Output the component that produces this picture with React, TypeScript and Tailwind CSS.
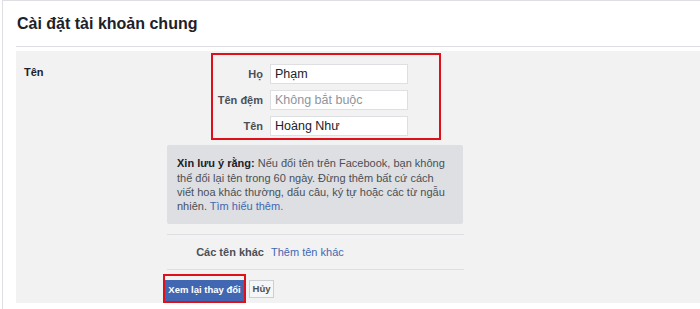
import React from 'react';

const NameField = ({ label, value, placeholder }: { label: string; value?: string; placeholder?: string }) => (
  <div className="flex items-center">
    <label className="w-[50px] text-right text-[11px] font-bold text-[#4b4f56] whitespace-nowrap">{label}</label>
    <input
      className="ml-[7px] w-[138px] h-[20px] px-[4px] bg-white border border-[#dddfe2] text-[12.5px] text-[#1d2129] placeholder:text-[#90949c] outline-none"
      defaultValue={value}
      placeholder={placeholder}
    />
  </div>
);

const App: React.FC = () => {
  return (
    <div className="w-[700px] h-[309px] bg-white overflow-hidden font-['Liberation_Sans',Arial,sans-serif]">
      <div className="ml-[2px] h-full border-l border-t border-[#dddfe2] pl-[13px]">
        {/* Header */}
        <div className="h-[46px] flex items-center pl-px border-b border-[#dddfe2]">
          <h2 className="text-[16px] font-bold text-[#1d2129] leading-5">Cài đặt tài khoản chung</h2>
        </div>

        {/* Name section */}
        <div className="mt-[4px] h-[252px] bg-[#f2f2f2] flex">
          <div className="w-[151px] pl-[8px] pt-[8px]">
            <span className="text-[11px] font-bold text-[#1d2129] leading-[14px]">Tên</span>
          </div>

          <div className="flex flex-col w-[297px]">
            <div className="ml-[44px] mt-[2px] w-[230px] h-[88px] border-2 border-[#e0101a] pt-[9px] flex flex-col gap-[6px]">
              <NameField label="Họ" value="Phạm" />
              <NameField label="Tên đệm" placeholder="Không bắt buộc" />
              <NameField label="Tên" value="Hoàng Như" />
            </div>

            <div className="mt-[5px] w-[296px] bg-[#dddfe2] rounded-[2px] pt-[11px] pb-[10px] px-[10px] text-[11px] leading-[14.4px] text-[#4b4f56]">
              <span className="font-bold text-[#1d2129]">Xin lưu ý rằng:</span> Nếu đổi tên trên Facebook, bạn không
              thể đổi lại tên trong 60 ngày. Đừng thêm bất cứ cách viết hoa khác thường, dấu câu, ký tự hoặc các từ ngẫu
              nhiên. <a className="text-[#4267b2]">Tìm hiểu thêm.</a>
            </div>

            <div className="mt-[10px] h-px bg-[#dddfe2]" />
            <div className="h-[35px] flex items-center">
              <span className="w-[97px] text-right text-[11px] font-bold text-[#4b4f56]">Các tên khác</span>
              <a className="ml-[7px] text-[11px] text-[#4267b2]">Thêm tên khác</a>
            </div>
            <div className="h-px bg-[#dddfe2]" />

            <div className="mt-[4px] -ml-[4px] flex items-center">
              <div className="border-2 border-[#e0101a]">
                <button className="w-[79px] h-[21px] bg-[#4267b2] border border-[#4267b2] text-white text-[9.5px] font-bold">
                  Xem lại thay đổi
                </button>
              </div>
              <button className="ml-[3px] w-[25px] h-[18px] bg-[#f5f6f7] border border-[#ccd0d5] text-[#4b4f56] text-[9.5px] font-bold">
                Hủy
              </button>
            </div>
          </div>
        </div>
      </div>
    </div>
  );
};

export default App;
